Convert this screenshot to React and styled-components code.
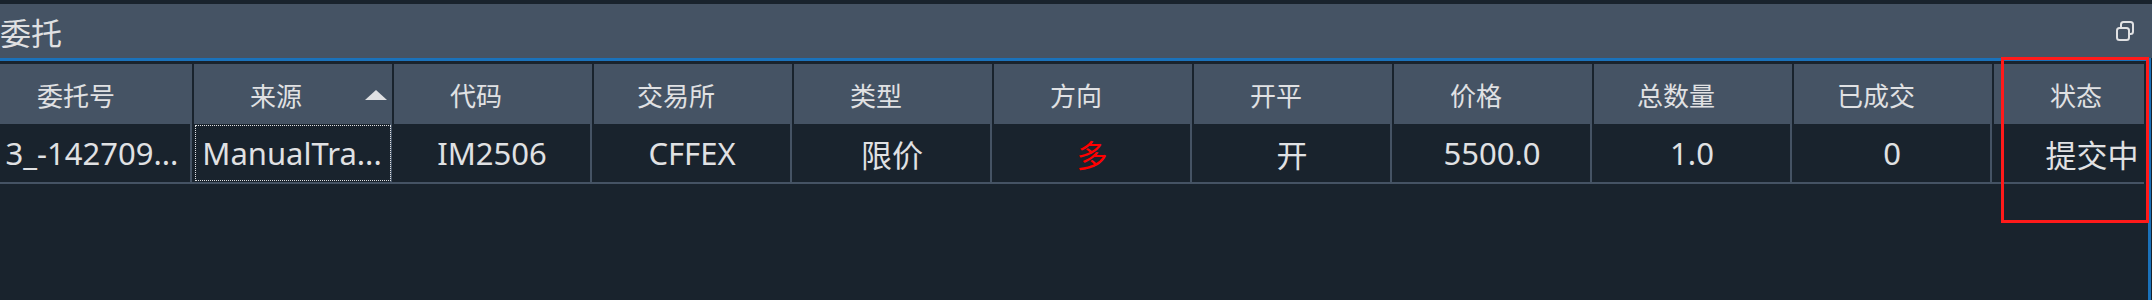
import React from "react";
import styled, { createGlobalStyle } from "styled-components";

const GlobalStyle = createGlobalStyle`
  html, body {
    margin: 0;
    padding: 0;
    background: #19232d;
    overflow: hidden;
  }
  body {
    font-family: "Noto Sans", "Noto Sans CJK SC", sans-serif;
    color: #e0e1e3;
  }
`;

const Page = styled.div`
  position: relative;
  width: 2152px;
  height: 300px;
  padding-top: 4px;
  box-sizing: border-box;
  display: flex;
  flex-direction: column;
  overflow: hidden;
`;

const TitleBar = styled.div`
  height: 54px;
  flex: none;
  background: #455364;
  display: flex;
  align-items: center;
  justify-content: space-between;
  padding-right: 16px;
`;

const Title = styled.span`
  font-family: "Noto Sans CJK SC", sans-serif;
  font-size: 31px;
  line-height: 1;
`;

const Frame = styled.div`
  flex: 1;
  margin-left: -9px;
  margin-right: 1px;
  border-top: 3px solid #1a72bb;
  border-right: 3px solid #1a72bb;
  padding: 3px 4px 0 3px;
  min-height: 0;
`;

const Viewport = styled.div`
  overflow: hidden;
  height: 100%;
`;

const Table = styled.div`
  display: grid;
  grid-template-columns: repeat(11, 200px);
  width: 2200px;
`;

const HeaderCell = styled.div`
  position: relative;
  height: 60px;
  margin-right: 2px;
  background: #455364;
  display: flex;
  align-items: center;
  justify-content: center;
  padding-right: 34px;
  font-family: "Noto Sans CJK SC", sans-serif;
  font-size: 26px;
  color: #e0e1e3;
`;

const SortArrow = styled.span`
  position: absolute;
  right: 5px;
  top: 26px;
  width: 0;
  height: 0;
  border-left: 11px solid transparent;
  border-right: 11px solid transparent;
  border-bottom: 10px solid #e0e1e3;
`;

const Cell = styled.div`
  height: 58px;
  margin-right: 2px;
  border-right: 2px solid #455364;
  display: flex;
  align-items: center;
  justify-content: center;
  font-size: 31px;
  white-space: nowrap;
  overflow: hidden;
  color: ${(p) => p.$color || "#e0e1e3"};
  outline: ${(p) => (p.$focus ? "1px dotted #e0e1e3" : "none")};
  outline-offset: -2px;
`;

const RowLine = styled.div`
  grid-column: 1 / -1;
  height: 2px;
  background: #455364;
`;

const Annotation = styled.div`
  position: absolute;
  left: 2001px;
  top: 57px;
  width: 148px;
  height: 166px;
  box-sizing: border-box;
  border: 3px solid #ff1a1a;
  pointer-events: none;
`;

const RestoreIcon = () => (
  <svg width="20" height="20" viewBox="0 0 20 20">
    <rect x="5" y="1" width="12" height="12" rx="2.5" fill="none" stroke="#e0e1e3" strokeWidth="2" />
    <rect x="1" y="7" width="12" height="12" rx="2.5" fill="#455364" stroke="#e0e1e3" strokeWidth="2" />
  </svg>
);

const columns = [
  { title: "委托号", value: "3_-142709..." },
  { title: "来源", value: "ManualTra...", sorted: true, focus: true },
  { title: "代码", value: "IM2506" },
  { title: "交易所", value: "CFFEX" },
  { title: "类型", value: "限价" },
  { title: "方向", value: "多", color: "#ff0000" },
  { title: "开平", value: "开" },
  { title: "价格", value: "5500.0" },
  { title: "总数量", value: "1.0" },
  { title: "已成交", value: "0" },
  { title: "状态", value: "提交中" },
];

export default function App() {
  return (
    <>
      <GlobalStyle />
      <Page>
        <TitleBar>
          <Title>委托</Title>
          <RestoreIcon />
        </TitleBar>
        <Frame>
          <Viewport>
            <Table>
              {columns.map((c) => (
                <HeaderCell key={"h" + c.title}>
                  {c.title}
                  {c.sorted && <SortArrow />}
                </HeaderCell>
              ))}
              {columns.map((c) => (
                <Cell key={"d" + c.title} $color={c.color} $focus={c.focus}>
                  {c.value}
                </Cell>
              ))}
              <RowLine />
            </Table>
          </Viewport>
        </Frame>
        <Annotation />
      </Page>
    </>
  );
}
